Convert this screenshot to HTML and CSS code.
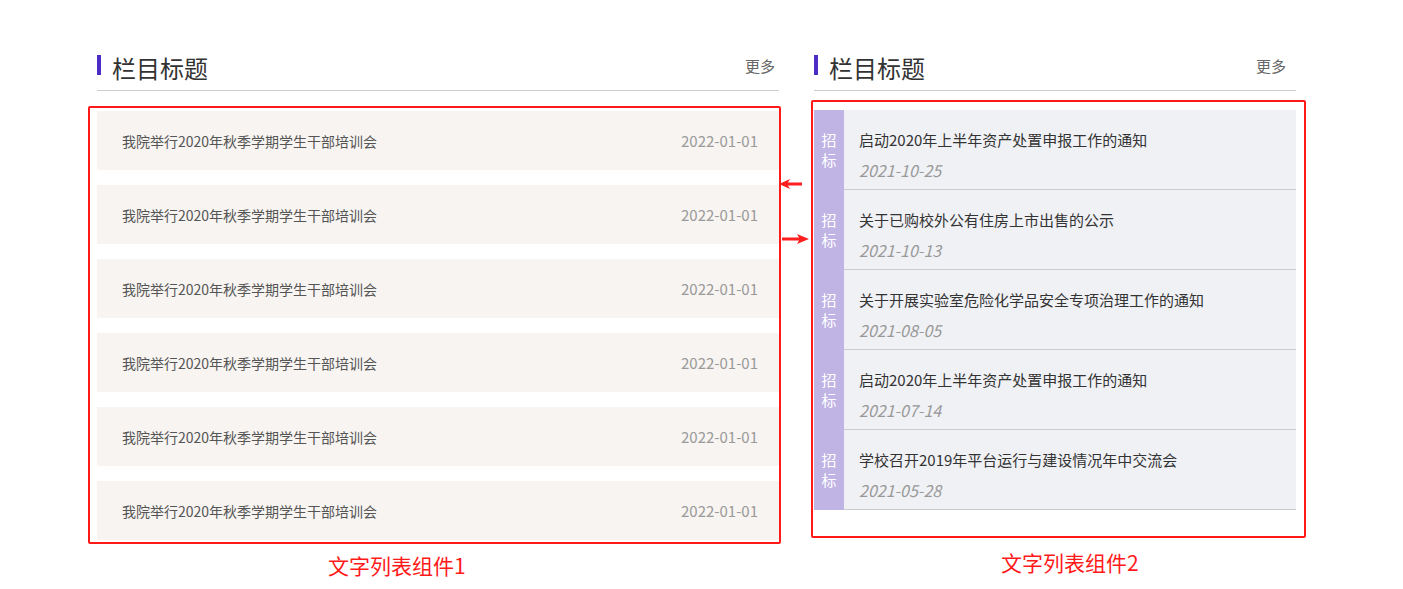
FILE: index.html
```html
<!DOCTYPE html>
<html lang="zh-CN">
<head>
    <meta charset="UTF-8">
    <meta name="viewport" content="width=device-width, initial-scale=1.0">
    <title>文字列表组件</title>
    <link rel="stylesheet" href="styles.css">
</head>
<body>
    <div class="page">
        <div class="column column-left">
            <div class="column-header">
                <span class="bar"></span>
                <span class="column-title">栏目标题</span>
                <a class="more more-left" href="#">更多</a>
            </div>
            <div class="demo-frame frame-left">
                <ul class="news-list">
                    <li class="news-item"><span class="news-title">我院举行2020年秋季学期学生干部培训会</span><span class="news-date">2022-01-01</span></li>
                    <li class="news-item"><span class="news-title">我院举行2020年秋季学期学生干部培训会</span><span class="news-date">2022-01-01</span></li>
                    <li class="news-item"><span class="news-title">我院举行2020年秋季学期学生干部培训会</span><span class="news-date">2022-01-01</span></li>
                    <li class="news-item"><span class="news-title">我院举行2020年秋季学期学生干部培训会</span><span class="news-date">2022-01-01</span></li>
                    <li class="news-item"><span class="news-title">我院举行2020年秋季学期学生干部培训会</span><span class="news-date">2022-01-01</span></li>
                    <li class="news-item"><span class="news-title">我院举行2020年秋季学期学生干部培训会</span><span class="news-date">2022-01-01</span></li>
                </ul>
            </div>
            <div class="demo-label label-left">文字列表组件1</div>
        </div>

        <div class="column column-right">
            <div class="column-header">
                <span class="bar"></span>
                <span class="column-title">栏目标题</span>
                <a class="more more-right" href="#">更多</a>
            </div>
            <div class="demo-frame frame-right">
                <ul class="tender-list">
                    <li class="tender-item">
                        <div class="tag">招<br>标</div>
                        <div class="tender-body">
                            <div class="tender-title">启动2020年上半年资产处置申报工作的通知</div>
                            <div class="tender-date">2021-10-25</div>
                        </div>
                    </li>
                    <li class="tender-item">
                        <div class="tag">招<br>标</div>
                        <div class="tender-body">
                            <div class="tender-title">关于已购校外公有住房上市出售的公示</div>
                            <div class="tender-date">2021-10-13</div>
                        </div>
                    </li>
                    <li class="tender-item">
                        <div class="tag">招<br>标</div>
                        <div class="tender-body">
                            <div class="tender-title">关于开展实验室危险化学品安全专项治理工作的通知</div>
                            <div class="tender-date">2021-08-05</div>
                        </div>
                    </li>
                    <li class="tender-item">
                        <div class="tag">招<br>标</div>
                        <div class="tender-body">
                            <div class="tender-title">启动2020年上半年资产处置申报工作的通知</div>
                            <div class="tender-date">2021-07-14</div>
                        </div>
                    </li>
                    <li class="tender-item">
                        <div class="tag">招<br>标</div>
                        <div class="tender-body">
                            <div class="tender-title">学校召开2019年平台运行与建设情况年中交流会</div>
                            <div class="tender-date">2021-05-28</div>
                        </div>
                    </li>
                </ul>
            </div>
            <div class="demo-label label-right">文字列表组件2</div>
        </div>

        <svg class="arrow arrow-one" width="24" height="12" viewBox="0 0 24 12">
            <path d="M0 6 L11 1 L9 4.5 L23 4.5 L23 7.5 L9 7.5 L11 11 Z" fill="#ff1f1f"/>
        </svg>
        <svg class="arrow arrow-two" width="28" height="12" viewBox="0 0 28 12">
            <path d="M28 6 L16 1 L18 4.5 L1 4.5 L1 7.5 L18 7.5 L16 11 Z" fill="#ff1f1f"/>
        </svg>
    </div>
</body>
</html>
```

FILE: styles.css
```css
body {
    margin: 0;
    background-color: #fff;
    font-family: "Noto Sans CJK SC", "Microsoft YaHei", sans-serif;
    overflow: hidden;
}

ul {
    list-style: none;
    margin: 0;
    padding: 0;
}

.page {
    position: relative;
    display: flex;
    align-items: flex-start;
    gap: 35px;
    padding: 51px 0 0 97px;
}

.column-left {
    width: 682px;
}

.column-right {
    width: 482px;
}

.column-header {
    display: flex;
    align-items: center;
    height: 34px;
    padding-bottom: 5px;
    border-bottom: 1px solid #cdcdcd;
}

.bar {
    width: 4px;
    height: 20px;
    margin-top: -6px;
    background-color: #4b2cc4;
}

.column-title {
    margin-left: 11px;
    font-size: 24px;
    line-height: 34px;
    color: #333;
}

.more {
    margin-left: auto;
    margin-top: -5px;
    font-size: 15px;
    line-height: 20px;
    color: #666;
    text-decoration: none;
}

.more-left {
    margin-right: 4px;
}

.more-right {
    margin-right: 10px;
}

/* red annotation frames around the demos */
.demo-frame {
    border: 2px solid #ff1a1a;
    border-radius: 2px;
}

.frame-left {
    margin: 15px -2px 0 -9px;
    padding: 3px 0 2px 7px;
}

.frame-right {
    margin: 9px -10px 0 -3px;
    padding: 8px 8px 26px 1px;
}

.demo-label {
    font-size: 21px;
    line-height: 29px;
    color: #ff1a1a;
}

.label-left {
    margin-top: 7px;
    padding-left: 231px;
}

.label-right {
    margin-top: 10px;
    padding-left: 187px;
}

/* list 1 */
.news-item {
    display: flex;
    align-items: center;
    justify-content: space-between;
    height: 59px;
    padding: 0 21px 0 25px;
    margin-bottom: 15px;
    background-color: #f7f4f1;
}

.news-item:last-child {
    margin-bottom: 0;
}

.news-title {
    font-size: 14px;
    color: #555;
}

.news-date {
    font-size: 15px;
    color: #9a9a9a;
}

/* list 2 */
.tender-item {
    display: flex;
    background-color: #f0f1f5;
}

.tag {
    display: flex;
    align-items: center;
    justify-content: center;
    width: 30px;
    font-size: 15px;
    line-height: 20px;
    text-align: center;
    color: #fff;
    background-color: #c0b4e4;
}

.tender-body {
    flex: 1;
    height: 80px;
    padding: 19px 0 0 15px;
    box-sizing: border-box;
    border-bottom: 1px solid #cbcbd2;
}

.tender-title {
    font-size: 15px;
    line-height: 22px;
    color: #333;
}

.tender-date {
    margin-top: 8px;
    font-size: 16px;
    line-height: 22px;
    font-style: italic;
    color: #999;
}

.arrow {
    position: absolute;
}

.arrow-one {
    left: 779px;
    top: 178px;
}

.arrow-two {
    left: 781px;
    top: 233px;
}
```
